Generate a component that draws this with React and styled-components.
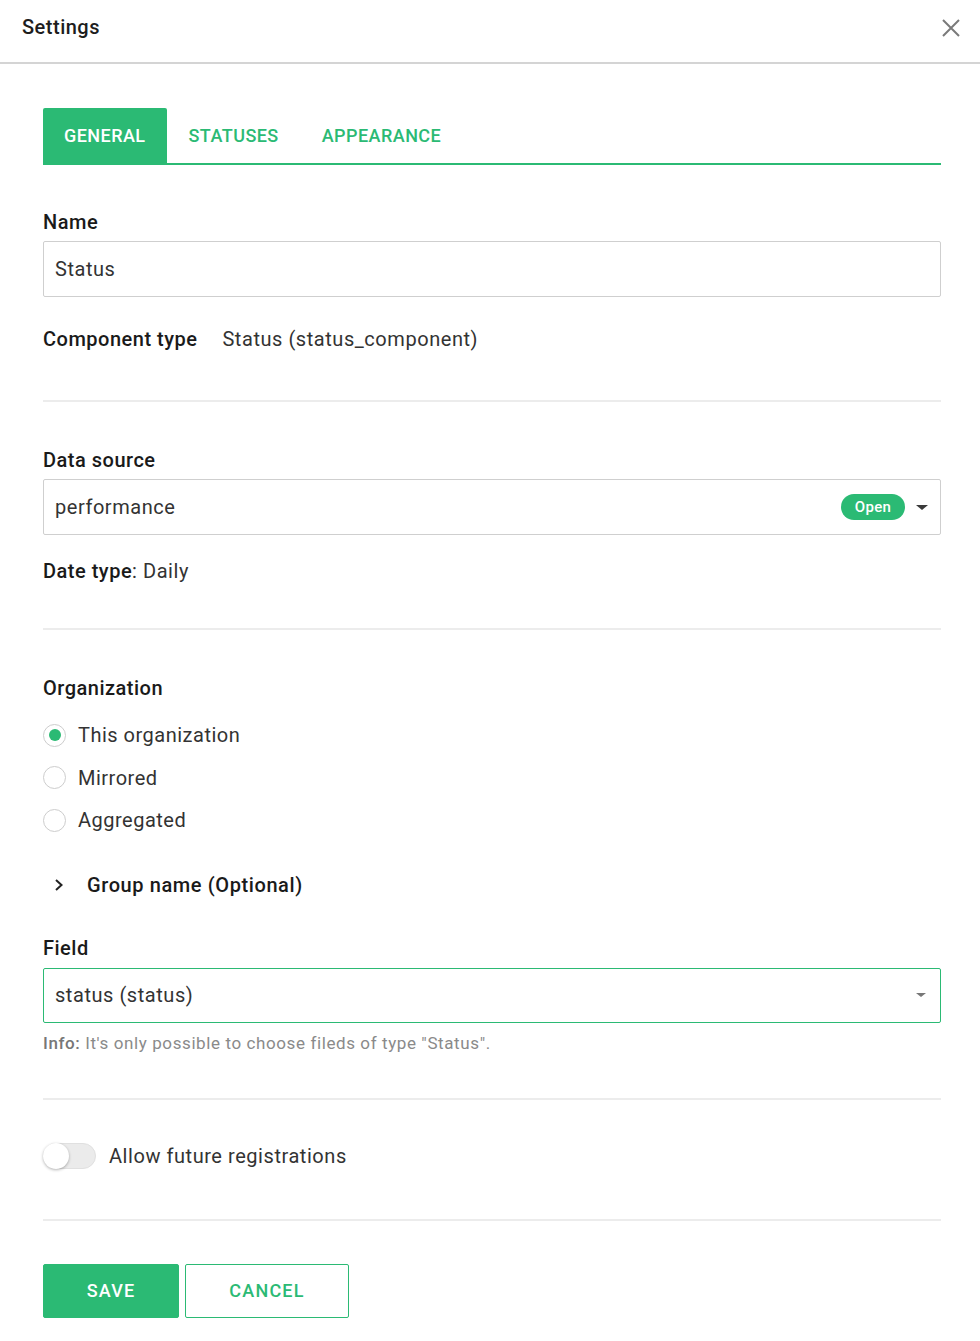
import React from 'react'
import styled, { createGlobalStyle } from 'styled-components'

const GREEN = '#2bba74'

const GlobalStyle = createGlobalStyle`
  html, body {
    margin: 0;
    padding: 0;
    background: #fff;
  }
  body {
    font-family: Roboto, "Liberation Sans", sans-serif;
    color: #222;
    letter-spacing: 0.55px;
    -webkit-font-smoothing: antialiased;
  }
  * { box-sizing: border-box; }
`

const Page = styled.div`
  width: 980px;
  min-height: 1341px;
  background: #fff;
`

const Header = styled.header`
  display: flex;
  justify-content: space-between;
  align-items: flex-start;
  height: 64px;
  padding: 15px 20px 0 22px;
  border-bottom: 2px solid #d4d4d4;
`

const Title = styled.h1`
  margin: 0;
  font-size: 20px;
  line-height: 24px;
  font-weight: 500;
  color: #1d1d1d;
  letter-spacing: 0.5px;
`

const CloseButton = styled.button`
  border: 0;
  background: none;
  padding: 0;
  margin-top: 2px;
  margin-right: -2px;
  width: 22px;
  height: 22px;
  cursor: pointer;
  display: flex;
  align-items: center;
  justify-content: center;
`

const Content = styled.main`
  padding: 44px 39px 0 43px;
`

const Tabs = styled.nav`
  display: flex;
  height: 57px;
  border-bottom: 2px solid ${GREEN};
`

const Tab = styled.div`
  display: flex;
  align-items: center;
  height: 55px;
  padding: 0 21px;
  margin-right: 1px;
  font-size: 18px;
  font-weight: 500;
  letter-spacing: 0.45px;
  color: ${(p) => (p.$active ? '#fff' : GREEN)};
  background: ${(p) => (p.$active ? GREEN : 'transparent')};
  border-radius: 2px 2px 0 0;
`

const Label = styled.div`
  font-size: 20px;
  line-height: 24px;
  font-weight: 500;
  letter-spacing: 0.5px;
  color: #1a1a1a;
  margin-top: ${(p) => p.$top || 0}px;
  margin-bottom: ${(p) => p.$bottom || 0}px;
`

const InputBox = styled.div`
  display: flex;
  align-items: center;
  height: ${(p) => p.$h || 56}px;
  padding: 0 12px 0 11px;
  border: ${(p) => (p.$focus ? `1.5px solid ${GREEN}` : '1.5px solid #cfcfcf')};
  border-radius: 2px;
  font-size: 20px;
  color: #333;
  background: #fff;
`

const InputText = styled.span`
  flex: 1;
`

const Badge = styled.span`
  display: inline-flex;
  align-items: center;
  justify-content: center;
  width: 64px;
  height: 26px;
  border-radius: 13px;
  background: ${GREEN};
  color: #fff;
  font-size: 15px;
  font-weight: 500;
  letter-spacing: 0.3px;
  margin-right: 11px;
`

const Caret = styled.span`
  width: 0;
  height: 0;
  border-left: ${(p) => p.$size}px solid transparent;
  border-right: ${(p) => p.$size}px solid transparent;
  border-top: ${(p) => p.$size - 1}px solid ${(p) => p.$color};
  margin-right: ${(p) => p.$right || 0}px;
`

const InfoRow = styled.div`
  display: flex;
  gap: 25px;
  font-size: 20px;
  line-height: 24px;
  margin-top: ${(p) => p.$top || 0}px;
  color: #333;
`

const Strong = styled.span`
  font-weight: 500;
  letter-spacing: 0.5px;
  color: #1a1a1a;
`

const Divider = styled.hr`
  border: 0;
  height: 2px;
  background: #ececec;
  margin: ${(p) => p.$top}px 0 0;
`

const RadioList = styled.div`
  display: flex;
  flex-direction: column;
  margin-top: 14px;
`

const RadioRow = styled.label`
  display: flex;
  align-items: center;
  height: 42.5px;
  gap: 12px;
  font-size: 20px;
  color: #333;
  letter-spacing: 0.5px;
`

const RadioCircle = styled.span`
  width: 23px;
  height: 23px;
  border-radius: 50%;
  border: 1.5px solid #cdcdcd;
  display: flex;
  align-items: center;
  justify-content: center;
  background: #fff;

  &::after {
    content: '';
    width: 12px;
    height: 12px;
    border-radius: 50%;
    background: ${(p) => (p.$checked ? GREEN : 'transparent')};
  }
`

const Collapse = styled.div`
  display: flex;
  align-items: center;
  height: 42px;
  margin-top: 22px;
  padding-left: 10px;
  gap: 22px;
  font-size: 20px;
  font-weight: 500;
  letter-spacing: 0.6px;
  color: #1a1a1a;
`

const Hint = styled.div`
  margin-top: 10px;
  font-size: 17px;
  line-height: 20px;
  letter-spacing: 0.6px;
  color: #8a8a8a;

  b {
    font-weight: 500;
    color: #777;
  }
`

const ToggleRow = styled.div`
  display: flex;
  align-items: center;
  gap: 13px;
  height: 30px;
  margin-top: 41px;
  font-size: 20px;
  color: #333;
`

const Track = styled.span`
  position: relative;
  width: 53px;
  height: 26px;
  border-radius: 13px;
  background: #ebebeb;
  border: 1px solid #e0e0e0;
`

const Knob = styled.span`
  position: absolute;
  left: -1px;
  top: -1px;
  width: 26px;
  height: 26px;
  border-radius: 50%;
  background: #fff;
  box-shadow: 0 1px 3px rgba(0, 0, 0, 0.3);
`

const Actions = styled.div`
  display: flex;
  gap: 6px;
  margin-top: 43px;
`

const Button = styled.button`
  height: 54px;
  width: ${(p) => p.$w}px;
  border: 1.5px solid ${GREEN};
  border-radius: 2px;
  background: ${(p) => (p.$primary ? GREEN : '#fff')};
  color: ${(p) => (p.$primary ? '#fff' : GREEN)};
  font-family: inherit;
  font-size: 18px;
  font-weight: 500;
  letter-spacing: 1.2px;
  cursor: pointer;
`

const CloseIcon = () => (
  <svg width="20" height="20" viewBox="0 0 20 20">
    <path d="M2 2 L18 18 M18 2 L2 18" stroke="#7a7a7a" strokeWidth="2" fill="none" />
  </svg>
)

const Chevron = () => (
  <svg width="12" height="14" viewBox="0 0 12 14">
    <path d="M3 2 L8.5 7 L3 12" stroke="#222" strokeWidth="2" fill="none" />
  </svg>
)

const Radio = ({ checked, children }) => (
  <RadioRow>
    <RadioCircle $checked={checked} />
    {children}
  </RadioRow>
)

export default function App() {
  return (
    <Page>
      <GlobalStyle />
      <Header>
        <Title>Settings</Title>
        <CloseButton aria-label="close"><CloseIcon /></CloseButton>
      </Header>
      <Content>
        <Tabs>
          <Tab $active>GENERAL</Tab>
          <Tab>STATUSES</Tab>
          <Tab>APPEARANCE</Tab>
        </Tabs>

        <Label $top={45} $bottom={7}>Name</Label>
        <InputBox>
          <InputText>Status</InputText>
        </InputBox>
        <InfoRow $top={30}>
          <Strong>Component type</Strong>
          <span>Status (status_component)</span>
        </InfoRow>

        <Divider $top={49} />

        <Label $top={46} $bottom={7}>Data source</Label>
        <InputBox>
          <InputText>performance</InputText>
          <Badge>Open</Badge>
          <Caret $size={6} $color="#3a3a3a" />
        </InputBox>
        <InfoRow $top={24}>
          <span><Strong>Date type</Strong>: Daily</span>
        </InfoRow>

        <Divider $top={45} />

        <Label $top={46}>Organization</Label>
        <RadioList>
          <Radio checked>This organization</Radio>
          <Radio>Mirrored</Radio>
          <Radio>Aggregated</Radio>
        </RadioList>

        <Collapse>
          <Chevron />
          Group name (Optional)
        </Collapse>

        <Label $top={30} $bottom={8}>Field</Label>
        <InputBox $focus $h={55}>
          <InputText>status (status)</InputText>
          <Caret $size={5} $color="#777" $right={2} />
        </InputBox>
        <Hint><b>Info:</b> It's only possible to choose fileds of type "Status".</Hint>

        <Divider $top={45} />

        <ToggleRow>
          <Track><Knob /></Track>
          Allow future registrations
        </ToggleRow>

        <Divider $top={48} />

        <Actions>
          <Button $primary $w={136}>SAVE</Button>
          <Button $w={164}>CANCEL</Button>
        </Actions>
      </Content>
    </Page>
  )
}
